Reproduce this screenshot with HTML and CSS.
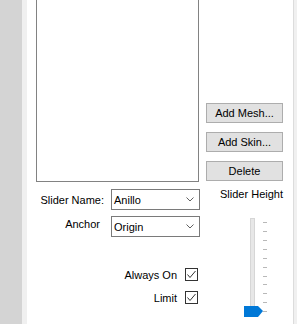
FILE: index.html
```html
<!DOCTYPE html>
<html lang="en">
<head>
    <meta charset="UTF-8">
    <title>Slider Editor</title>
    <link rel="stylesheet" href="styles.css">
</head>
<body>
    <div class="window">
        <div class="side"></div>
        <div class="edge"></div>
        <div class="panel">
            <div class="left-col">
                <div class="listbox"></div>
                <div class="form">
                    <label class="form-label">Slider Name:</label>
                    <div class="combo">
                        <span>Anillo</span>
                        <svg class="chevron" width="8" height="5" viewBox="0 0 8 5"><polyline points="0.5,0.5 4,4 7.5,0.5" fill="none" stroke="#606060" stroke-width="1"/></svg>
                    </div>
                    <label class="form-label anchor-label">Anchor</label>
                    <div class="combo">
                        <span>Origin</span>
                        <svg class="chevron" width="8" height="5" viewBox="0 0 8 5"><polyline points="0.5,0.5 4,4 7.5,0.5" fill="none" stroke="#606060" stroke-width="1"/></svg>
                    </div>
                </div>
                <div class="checks">
                    <div class="check-row">
                        <span>Always On</span>
                        <span class="checkbox">
                            <svg width="11" height="11" viewBox="0 0 11 11"><polyline points="1.5,5.5 4,8.5 9.5,2" fill="none" stroke="#333" stroke-width="1"/></svg>
                        </span>
                    </div>
                    <div class="check-row">
                        <span>Limit</span>
                        <span class="checkbox">
                            <svg width="11" height="11" viewBox="0 0 11 11"><polyline points="1.5,5.5 4,8.5 9.5,2" fill="none" stroke="#333" stroke-width="1"/></svg>
                        </span>
                    </div>
                </div>
            </div>
            <div class="right-col">
                <button>Add Mesh...</button>
                <button>Add Skin...</button>
                <button>Delete</button>
                <div class="slider-label">Slider Height</div>
                <svg class="slider" width="30" height="104" viewBox="0 0 30 104">
                    <rect x="10.5" y="3.5" width="4" height="95" fill="#e7e7e7" stroke="#d6d6d6"/>
                    <g fill="#b8b8b8">
                        <rect x="23" y="7" width="4" height="1"/>
                        <rect x="23" y="16" width="4" height="1"/>
                        <rect x="23" y="25" width="4" height="1"/>
                        <rect x="23" y="34" width="4" height="1"/>
                        <rect x="23" y="43" width="4" height="1"/>
                        <rect x="23" y="52" width="4" height="1"/>
                        <rect x="23" y="61" width="4" height="1"/>
                        <rect x="23" y="69" width="4" height="1"/>
                        <rect x="23" y="78" width="4" height="1"/>
                        <rect x="23" y="87" width="4" height="1"/>
                        <rect x="23" y="96" width="4" height="1"/>
                    </g>
                    <polygon points="4,91 18,91 23,96 18,102 4,102" fill="#0078d7"/>
                </svg>
            </div>
        </div>
        <div class="outer"></div>
    </div>
</body>
</html>
```

FILE: styles.css
```css
body {
    margin: 0;
    font-family: "Liberation Sans", Arial, sans-serif;
    font-size: 11px;
    color: #000;
    overflow: hidden;
}
.window {
    display: flex;
    width: 297px;
    height: 324px;
}
.side {
    width: 22px;
    background: #d4d4d4;
}
.edge {
    width: 5px;
    background: #f0f0f0;
}
.panel {
    flex: 1;
    display: flex;
    gap: 7px;
    padding-left: 9px;
    background: #fff;
    border-right: 1px solid #dcdcdc;
}
.outer {
    width: 3px;
    background: #f0f0f0;
}
.left-col {
    width: 163px;
    display: flex;
    flex-direction: column;
}
.listbox {
    height: 181px;
    margin-top: -1px;
    border: 1px solid #828282;
    background: #fff;
}
.form {
    display: grid;
    grid-template-columns: 68px 89px;
    column-gap: 7px;
    row-gap: 6px;
    margin-top: 7px;
}
.form-label {
    text-align: right;
    align-self: center;
    white-space: nowrap;
}
.anchor-label {
    padding-right: 4px;
    padding-bottom: 6px;
}
.combo {
    height: 19px;
    border: 1px solid #7a7a7a;
    display: flex;
    align-items: center;
    justify-content: space-between;
    padding: 0 5px 0 2px;
}
.chevron {
    display: block;
}
.checks {
    display: flex;
    flex-direction: column;
    gap: 10px;
    margin-top: 31px;
    padding-right: 1px;
}
.check-row {
    display: flex;
    justify-content: flex-end;
    align-items: center;
    gap: 8px;
    height: 13px;
}
.checkbox {
    width: 11px;
    height: 11px;
    border: 1px solid #333;
    background: #fff;
    display: block;
}
.checkbox svg {
    display: block;
}
.right-col {
    width: 77px;
    display: flex;
    flex-direction: column;
    padding-top: 103px;
}
button {
    width: 77px;
    height: 20px;
    margin-bottom: 9px;
    padding: 0;
    font-family: "Liberation Sans", Arial, sans-serif;
    font-size: 11px;
    color: #000;
    background-color: #e1e1e1;
    border: 1px solid #adadad;
    border-radius: 0;
}
button:last-of-type {
    margin-bottom: 0;
}
.slider-label {
    text-align: right;
    line-height: 14px;
    margin-top: 6px;
    white-space: nowrap;
}
.slider {
    display: block;
    margin-top: 14px;
    margin-left: 34px;
}
```
